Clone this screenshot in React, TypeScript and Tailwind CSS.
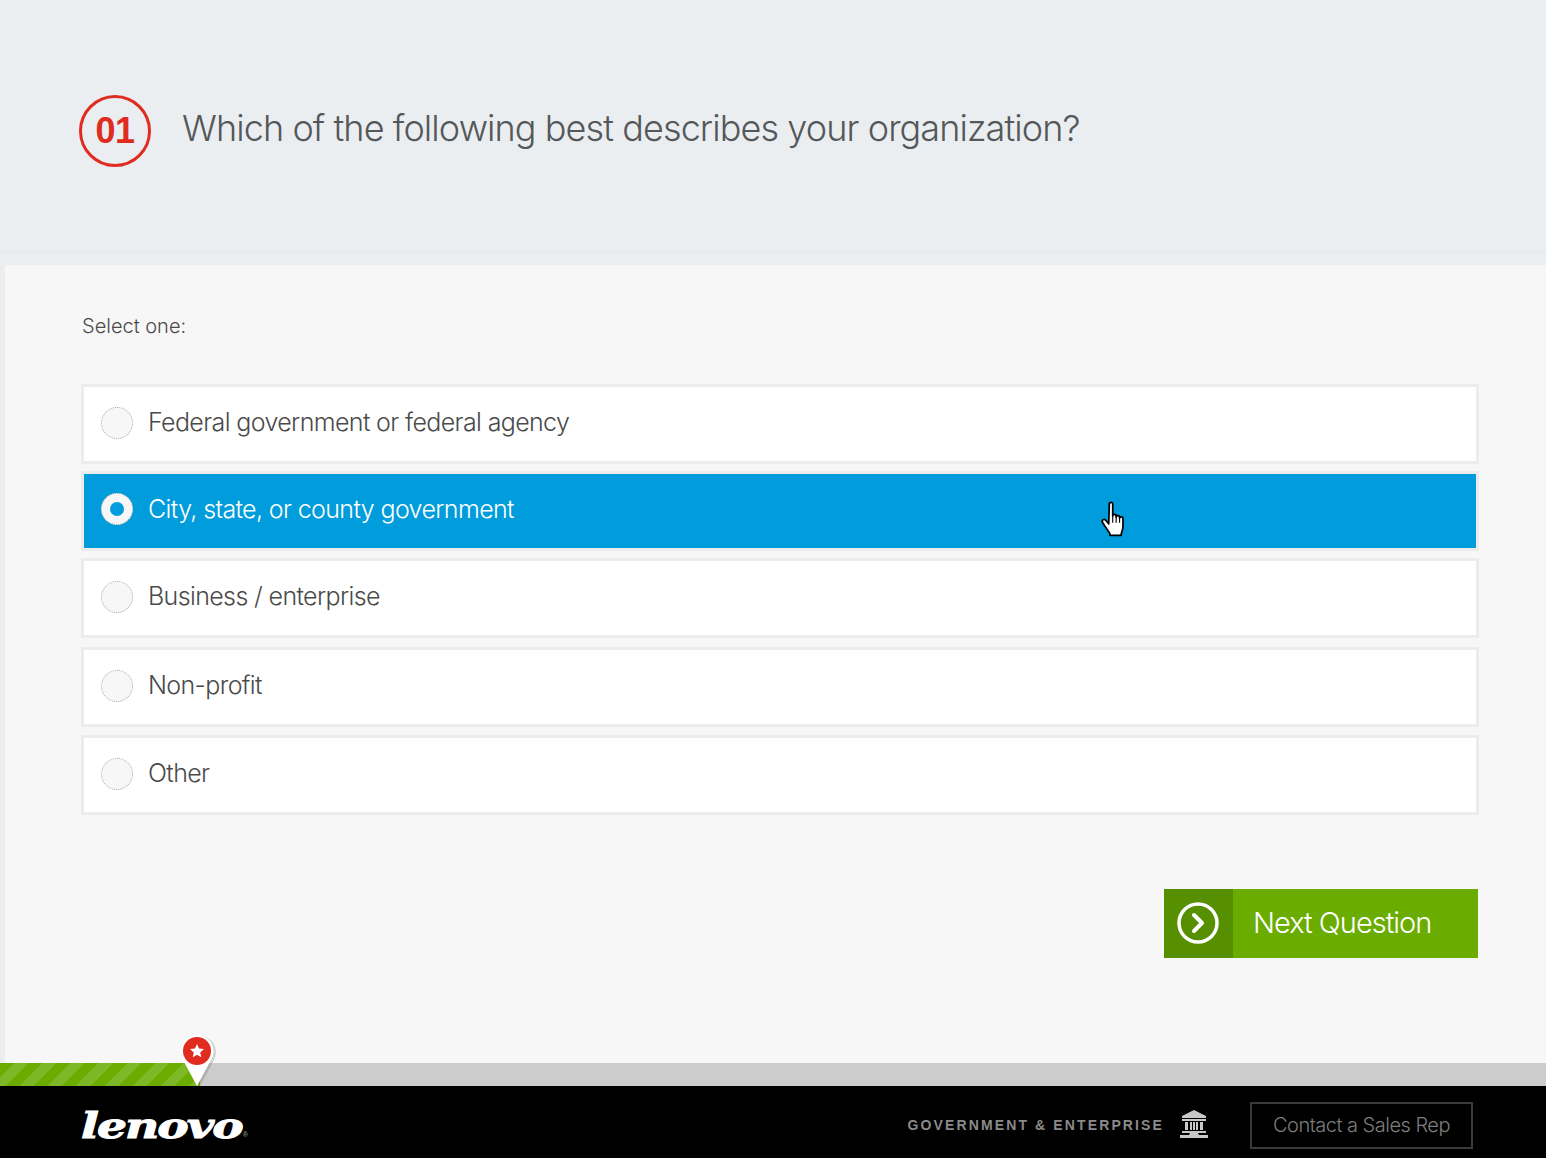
const options = [
  { label: 'Federal government or federal agency', margin: 'mt-0' },
  { label: 'City, state, or county government', margin: 'mt-[7px]', active: true },
  { label: 'Business / enterprise', margin: 'mt-[7px]' },
  { label: 'Non-profit', margin: 'mt-[9px]' },
  { label: 'Other', margin: 'mt-[8px]' },
];

const Radio = ({ active }: { active?: boolean }) => (
  <span
    className={`flex h-8 w-8 shrink-0 items-center justify-center rounded-full border border-dotted border-[#a8a8a8] bg-[#f7f7f7] ${active ? '-translate-y-[2px]' : '-translate-y-[1px]'}`}
  >
    {active && <span className="h-[14px] w-[14px] rounded-full bg-[#009cdb]" />}
  </span>
);

const HandCursor = () => (
  <svg width="30" height="41" viewBox="0 0 26 36" className="absolute left-[1016px] top-[26px]">
    <path
      d="M8 3.500c0-2 3-2 3 0v10.500c0-1.800 3-1.800 3 0v1c0-1.800 3-1.800 3 0v1c0-1.600 3-1.600 3 0v7c0 3-1 4.500-1.500 6.500v1.500h-10v-1.500c-1-2-5-7-6.500-10-1-2 1.500-3.500 3-1.500l2.500 3z"
      fill="#fff"
      stroke="#000"
      strokeWidth="1.500"
      strokeLinejoin="round"
    />
    <path d="M11 14v6M14 15v5M17 16v4" stroke="#000" strokeWidth="1" />
  </svg>
);

const BankIcon = () => (
  <svg width="30" height="30" viewBox="0 0 30 30" fill="#c8c8c8">
    <path d="M15 0 27 6v2H3V6z" />
    <rect x="3" y="9" width="24" height="2" />
    <path d="M6 12h3v8H6zM11 12h2v8h-2zM14 12h2v8h-2zM17 12h2v8h-2zM21 12h3v8h-3z" />
    <rect x="3" y="21" width="24" height="2" />
    <path d="M1 25h9l1-2h8l1 2h9v3H1zM11 26h8l1 2H10z" />
  </svg>
);

const Pin = () => (
  <svg width="42" height="54" viewBox="0 0 42 54" className="absolute left-[177px] top-[-29px]">
    <path d="M20 52 6 26a16.500 16.500 0 1 1 28 0z" fill="#000" opacity=".14" transform="translate(2.500 1)" />
    <path d="M20 52 6 26a16.500 16.500 0 1 1 28 0z" fill="#fff" />
    <circle cx="20" cy="17" r="14" fill="#e02b20" />
    <path d="m20 10 2 4.600 5 .5-3.800 3.300 1.100 4.900-4.300-2.600-4.300 2.600 1.100-4.900-3.800-3.300 5-.5z" fill="#fff" />
  </svg>
);

export default function App() {
  return (
    <div className="flex h-[1158px] flex-col overflow-hidden bg-[#ebeef1] font-['Inter','Liberation_Sans',sans-serif]">
      {/* Question */}
      <header className="h-[265px] shrink-0">
        <div className="flex h-[253px] items-start border-b border-[#e6e9ec] pl-[79px] pt-[95px]">
          <span className="flex h-[72px] w-[72px] items-center justify-center rounded-full border-[3.5px] border-[#e02b20] font-['Liberation_Sans',sans-serif] text-[36px] font-bold tracking-[-0.5px] text-[#e02b20]">
            01
          </span>
          <h1 className="ml-[31px] mt-[9px] text-[36px] leading-[48px] font-light tracking-[-0.91px] text-[#54585a]">
            Which of the following best describes your organization?
          </h1>
        </div>
      </header>

      <main className="ml-[5px] flex-1 bg-[#f7f7f7] pl-[76px] pr-[67px]">
        <p className="pl-[1px] pt-[49px] text-[20px] leading-6 font-light text-[#4a4a4a]">Select one:</p>

        <div className="mt-[46px]">
          {options.map(opt => (
            <div
              key={opt.label}
              className={`relative flex h-[80px] items-center border-[3px] border-[#ececec] pl-[17px] ${opt.margin} ${opt.active ? 'bg-[#009cdb] text-white' : 'bg-white text-[#4a4a4a]'}`}
            >
              <Radio active={opt.active} />
              <span className="ml-[15px] -translate-y-[2px] text-[25px] leading-8 font-light tracking-[-0.63px]">
                {opt.label}
              </span>
              {opt.active && <HandCursor />}
            </div>
          ))}
        </div>

        <div className="mt-[74px] flex justify-end pr-[1px]">
          <button className="flex h-[69px] w-[314px] items-center bg-[#6aad00] text-left text-white">
            <span className="flex h-full w-[69px] items-center justify-center bg-[#568f00]">
              <svg width="42" height="42" viewBox="0 0 42 42" fill="none" stroke="#fff" strokeWidth="3.500" className="-translate-x-[1px] -translate-y-[1px]">
                <circle cx="21" cy="21" r="19" />
                <path d="m17 13 8 8-8 8" strokeWidth="4" strokeLinecap="round" strokeLinejoin="round" />
              </svg>
            </span>
            <span className="ml-[20px] -translate-y-[1px] text-[29px] font-light tracking-[-1px]">Next Question</span>
          </button>
        </div>
      </main>

      {/* Progress */}
      <div className="relative flex h-[23px] shrink-0 bg-[#cccccc]">
        <div className="h-full w-[200px] bg-[repeating-linear-gradient(135deg,#6aad00_0px,#6aad00_10px,#7fb826_10px,#7fb826_20px)]" />
        <Pin />
      </div>

      <footer className="flex h-[72px] shrink-0 items-center bg-black pl-[81px] pr-[73px] pt-[6px]">
        <span className="flex w-[167px] items-end">
          <span className="origin-left scale-x-[1.31] font-['DejaVu_Serif',serif] text-[36px] leading-none font-bold italic tracking-[-1.500px] text-white [-webkit-text-stroke:1px_white]">
            lenovo
          </span>
          <span className="ml-auto pb-[5px] font-['Liberation_Sans',sans-serif] text-[7px] leading-none text-[#aaaaaa]">®</span>
        </span>
        <span className="ml-auto font-['Liberation_Sans',sans-serif] text-[14px] font-bold tracking-[2.120px] text-[#8a8a8a]">
          GOVERNMENT &amp; ENTERPRISE
        </span>
        <span className="ml-[15px]">
          <BankIcon />
        </span>
        <a className="ml-[41px] flex h-[47px] w-[223px] items-center justify-center border-2 border-[#3a3a3a] text-[20px] font-light tracking-[-0.5px] text-[#7d7d7d]">
          Contact a Sales Rep
        </a>
      </footer>
    </div>
  );
}
